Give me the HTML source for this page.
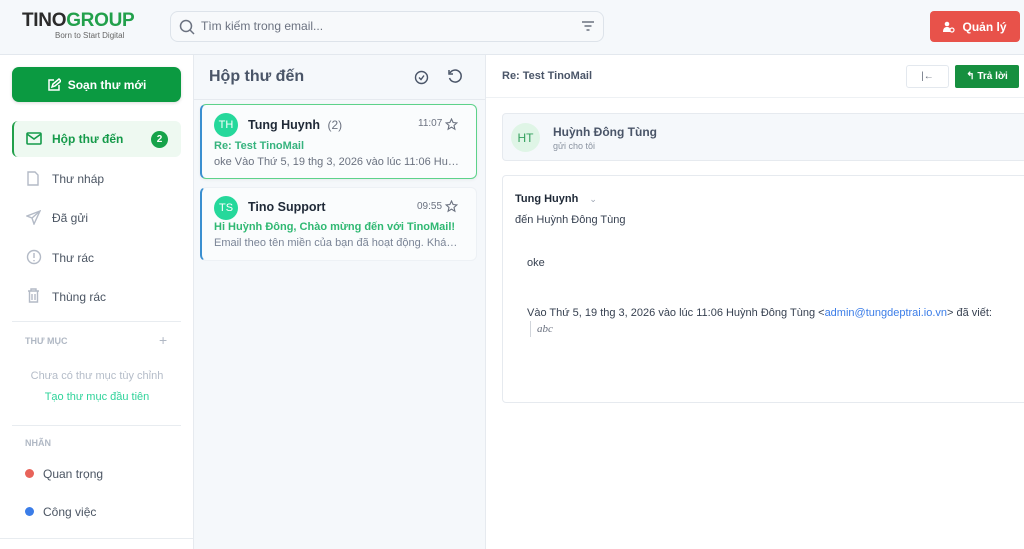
<!DOCTYPE html>
<html><head><meta charset="utf-8">
<style>
*{box-sizing:border-box;margin:0;padding:0}
body{width:1024px;height:549px;overflow:hidden;font-family:"Liberation Sans","Noto Sans CJK SC",sans-serif;background:#fff;position:relative;color:#1f2937}
.a{position:absolute}
.hdr{left:0;top:0;width:1024px;height:55px;background:#f5f8fb;border-bottom:1px solid #e3e8ee}
.side{left:0;top:55px;width:194px;height:494px;background:#fff;border-right:1px solid #e6eaef}
.mid{left:194px;top:55px;width:292px;height:494px;background:#f5f8fb;border-right:1px solid #e6eaef}
.nav{font-size:12px;color:#4b5563}
.ico{stroke:#b3bac6;fill:none;stroke-width:1.4}
.card{background:#fafcfd;border-radius:6px}
.av{border-radius:50%;color:#fff;font-size:11px;display:flex;align-items:center;justify-content:center}
.pv{font-size:11px;color:#6b7280;white-space:nowrap;overflow:hidden;text-overflow:ellipsis;width:247px}
</style></head><body>
<div class="a hdr"></div>
<div class="a" style="left:22px;top:10px;font-size:19px;font-weight:bold;letter-spacing:-0.3px;color:#2b2b2b">TINO<span style="color:#22a04b">GROUP</span></div>
<div class="a" style="left:55px;top:31px;font-size:8px;color:#666">Born to Start Digital</div>
<div class="a" style="left:170px;top:11px;width:434px;height:31px;border:1px solid #dde3ea;border-radius:8px;background:#f7f9fb"></div>
<svg class="a" style="left:179px;top:19px" width="16" height="16" viewBox="0 0 16 16"><circle cx="7" cy="7" r="5.5" fill="none" stroke="#6b7280" stroke-width="1.5"/><path d="M11 11l4 4" stroke="#6b7280" stroke-width="1.5"/></svg>
<div class="a" style="left:201px;top:19px;font-size:12px;color:#6b7280">Tìm kiếm trong email...</div>
<svg class="a" style="left:581px;top:20px" width="14" height="12"><path d="M1 2h12M3.5 6h7M5.5 10h3" stroke="#6b7280" stroke-width="1.4"/></svg>
<div class="a" style="left:930px;top:11px;width:90px;height:31px;background:#e8524a;border-radius:4px;color:#fff;font-size:12px;font-weight:bold;display:flex;align-items:center;justify-content:center"><svg width="12" height="12" style="margin-right:7px"><circle cx="4" cy="3" r="2.3" fill="#fff"/><path d="M0 11c0-4 2-5 4-5s3 1 3 2v3z" fill="#fff"/><circle cx="9" cy="9" r="2" fill="none" stroke="#fff" stroke-width="1.2"/></svg>Quản lý</div>

<div class="a side"></div>
<div class="a" style="left:12px;top:67px;width:169px;height:35px;background:#0b9a41;border-radius:7px;color:#fff;font-size:12px;font-weight:bold;display:flex;align-items:center;justify-content:center;box-shadow:0 1px 3px rgba(0,0,0,.15)">
<svg width="14" height="14" style="margin-right:7px"><path d="M7 2H2v10h10V7M5 9l1-3 6-5 2 2-6 5z" fill="none" stroke="#fff" stroke-width="1.5"/></svg>Soạn thư mới</div>
<div class="a" style="left:12px;top:121px;width:169px;height:36px;background:#eef9f1;border-left:2px solid #22a04b;border-radius:6px"></div>
<svg class="a" style="left:26px;top:132px" width="16" height="13"><rect x="1" y="1" width="14" height="11" rx="1" fill="none" stroke="#159a4a" stroke-width="1.6"/><path d="M1 2l7 5 7-5" fill="none" stroke="#159a4a" stroke-width="1.6"/></svg>
<div class="a" style="left:52px;top:132px;font-size:12px;font-weight:bold;color:#159a4a">Hộp thư đến</div>
<div class="a av" style="left:151px;top:131px;width:17px;height:17px;background:#16a34a;font-size:10px;font-weight:bold">2</div>
<svg class="a" style="left:27px;top:171px" width="12" height="15"><path d="M1 1h7l3 3v10H1z" class="ico"/></svg>
<div class="a nav" style="left:52px;top:172px">Thư nháp</div>
<svg class="a" style="left:26px;top:210px" width="15" height="15"><path d="M14 1L1 6l5 2 2 6z M6 8l8-7" class="ico"/></svg>
<div class="a nav" style="left:52px;top:211px">Đã gửi</div>
<svg class="a" style="left:26px;top:249px" width="16" height="16"><circle cx="8" cy="8" r="6.5" class="ico"/><path d="M8 4v5M8 11v1.3" class="ico"/></svg>
<div class="a nav" style="left:52px;top:251px">Thư rác</div>
<svg class="a" style="left:27px;top:288px" width="13" height="15"><path d="M1 3h11M4 3V1h5v2M2.5 3v11h8V3M5 6v6M8 6v6" class="ico"/></svg>
<div class="a nav" style="left:52px;top:290px">Thùng rác</div>
<div class="a" style="left:12px;top:321px;width:169px;height:1px;background:#e8ecf0"></div>
<div class="a" style="left:25px;top:336px;font-size:9px;font-weight:bold;color:#b0b8c4">THƯ MỤC</div>
<div class="a" style="left:159px;top:332px;font-size:14px;color:#b0b8c4">+</div>
<div class="a" style="left:0;top:370px;width:194px;text-align:center;font-size:11px;color:#b4bcc8">Chưa có thư mục tùy chỉnh</div>
<div class="a" style="left:0;top:391px;width:194px;text-align:center;font-size:11px;color:#2fd39a">Tạo thư mục đầu tiên</div>
<div class="a" style="left:12px;top:425px;width:169px;height:1px;background:#e8ecf0"></div>
<div class="a" style="left:25px;top:438px;font-size:9px;font-weight:bold;color:#b0b8c4">NHÃN</div>
<div class="a" style="left:25px;top:469px;width:9px;height:9px;border-radius:50%;background:#e8635a"></div>
<div class="a nav" style="left:43px;top:467px">Quan trọng</div>
<div class="a" style="left:25px;top:507px;width:9px;height:9px;border-radius:50%;background:#3b7de8"></div>
<div class="a nav" style="left:43px;top:505px">Công việc</div>
<div class="a" style="left:0;top:538px;width:193px;height:1px;background:#e8ecf0"></div>

<div class="a mid"></div>
<div class="a" style="left:194px;top:99px;width:291px;height:1px;background:#e6eaef"></div>
<div class="a" style="left:209px;top:68px;font-size:16px;font-weight:bold;color:#4a5568">Hộp thư đến</div>
<svg class="a" style="left:414px;top:70px" width="15" height="15"><circle cx="7.5" cy="7.5" r="6" fill="none" stroke="#4a5568" stroke-width="1.4"/><path d="M5 7.5l2 2 3-4" fill="none" stroke="#4a5568" stroke-width="1.4"/></svg>
<svg class="a" style="left:447px;top:69px" width="16" height="16"><path d="M3 4A6 6 0 1 1 2.5 9" fill="none" stroke="#4a5568" stroke-width="1.5"/><path d="M2 1v4h4" fill="none" stroke="#4a5568" stroke-width="1.5"/></svg>

<div class="a card" style="left:200px;top:104px;width:277px;height:75px;border:1.5px solid #5dd28a;border-left:2px solid #3a8fd0;box-shadow:0 1px 3px rgba(0,0,0,.06)"></div>
<div class="a av" style="left:214px;top:113px;width:24px;height:24px;background:#25d89b">TH</div>
<div class="a" style="left:248px;top:118px;font-size:12.5px;font-weight:bold;color:#1f2937">Tung Huynh <span style="font-weight:normal;color:#6b7280;font-size:12px;margin-left:4px">(2)</span></div>
<div class="a" style="left:418px;top:118px;font-size:10px;color:#6b7280">11:07</div>
<svg class="a" style="left:445px;top:118px" width="13" height="13"><path d="M6.5 1l1.6 3.5 3.8.4-2.9 2.5.9 3.8-3.4-2-3.4 2 .9-3.8L1.1 4.9l3.8-.4z" fill="none" stroke="#6b7280" stroke-width="1.1"/></svg>
<div class="a" style="left:214px;top:140px;font-size:11px;font-weight:bold;color:#36b37e">Re: Test TinoMail</div>
<div class="a pv" style="left:214px;top:156px">oke Vào Thứ 5, 19 thg 3, 2026 vào lúc 11:06 Huỳnh Đông Tùng</div>

<div class="a card" style="left:200px;top:187px;width:277px;height:74px;border:1px solid #edf1f5;border-left:2px solid #3a8fd0"></div>
<div class="a av" style="left:214px;top:196px;width:24px;height:24px;background:#25d89b">TS</div>
<div class="a" style="left:248px;top:200px;font-size:12.5px;font-weight:bold;color:#1f2937">Tino Support</div>
<div class="a" style="left:417px;top:201px;font-size:10px;color:#6b7280">09:55</div>
<svg class="a" style="left:445px;top:200px" width="13" height="13"><path d="M6.5 1l1.6 3.5 3.8.4-2.9 2.5.9 3.8-3.4-2-3.4 2 .9-3.8L1.1 4.9l3.8-.4z" fill="none" stroke="#6b7280" stroke-width="1.1"/></svg>
<div class="a" style="left:214px;top:221px;font-size:11px;font-weight:bold;color:#2fb872">Hi Huỳnh Đông, Chào mừng đến với TinoMail!</div>
<div class="a pv" style="left:214px;top:237px;color:#7a8496">Email theo tên miền của bạn đã hoạt động. Khám phá ngay</div>

<div class="a" style="left:502px;top:70px;font-size:11px;font-weight:bold;color:#4a5568">Re: Test TinoMail</div>
<div class="a" style="left:486px;top:97px;width:538px;height:1px;background:#eef1f4"></div>
<div class="a" style="left:906px;top:65px;width:43px;height:23px;border:1px solid #e3e8ee;border-radius:3px;font-size:10px;color:#6b7280;text-align:center;line-height:21px">|←</div>
<div class="a" style="left:955px;top:65px;width:64px;height:23px;background:#168f3f;border-radius:2px;color:#fff;font-size:10px;font-weight:bold;text-align:center;line-height:23px">↰ Trả lời</div>

<div class="a" style="left:502px;top:113px;width:530px;height:48px;background:#f5f8fb;border:1px solid #e6eaef;border-radius:4px"></div>
<div class="a av" style="left:511px;top:123px;width:29px;height:29px;background:#dff5e6;color:#34a05e;font-size:12px">HT</div>
<div class="a" style="left:553px;top:125px;font-size:12px;font-weight:bold;color:#4a5568">Huỳnh Đông Tùng</div>
<div class="a" style="left:553px;top:141px;font-size:9px;color:#8a93a0">gửi cho tôi</div>

<div class="a" style="left:502px;top:175px;width:530px;height:228px;border:1px solid #e6eaef;border-radius:4px;background:#fff"></div>
<div class="a" style="left:515px;top:193px;font-size:11px;font-weight:bold;color:#1f2937">Tung Huynh <span style="font-weight:normal;color:#9aa3b2;font-size:9px;margin-left:8px">⌄</span></div>
<div class="a" style="left:515px;top:214px;font-size:11px;color:#374151">đến Huỳnh Đông Tùng</div>
<div class="a" style="left:527px;top:257px;font-size:11px;color:#374151">oke</div>
<div class="a" style="left:527px;top:307px;font-size:11px;color:#374151;white-space:nowrap">Vào Thứ 5, 19 thg 3, 2026 vào lúc 11:06 Huỳnh Đông Tùng &lt;<span style="color:#3b7de8">admin@tungdeptrai.io.vn</span>&gt; đã viết:</div>
<div class="a" style="left:530px;top:321px;width:1px;height:16px;background:#d1d5db"></div>
<div class="a" style="left:537px;top:323px;font-size:11px;font-style:italic;color:#6b7280;font-family:'Liberation Serif',serif">abc</div>
</body></html>
